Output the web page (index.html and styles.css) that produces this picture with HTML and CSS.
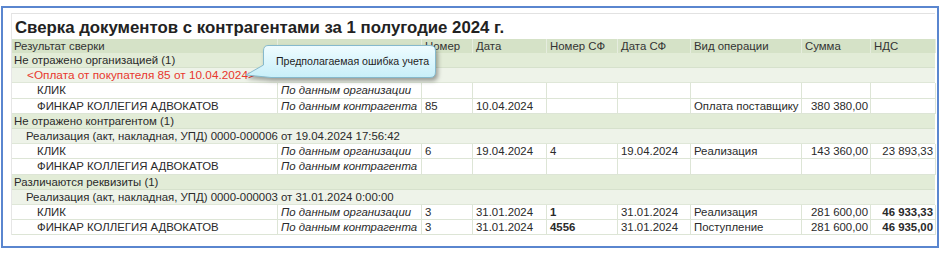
FILE: index.html
```html
<!DOCTYPE html>
<html lang="ru">
<head>
<meta charset="utf-8">
<title>Сверка документов</title>
<link rel="stylesheet" href="styles.css">
</head>
<body>
<div class="frame">
  <div class="panel">
    <div class="title">Сверка документов с контрагентами за 1 полугодие 2024 г.</div>
    <div class="grid">
      <div class="row head">
        <div class="c">Результат сверки</div><div class="c"></div><div class="c">Номер</div><div class="c">Дата</div><div class="c">Номер СФ</div><div class="c">Дата СФ</div><div class="c">Вид операции</div><div class="c">Сумма</div><div class="c">НДС</div>
      </div>
      <div class="row group"><div class="g">Не отражено организацией (1)</div></div>
      <div class="row sub"><div class="g red">&lt;Оплата от покупателя 85 от 10.04.2024&gt;</div></div>
      <div class="row item">
        <div class="c name">КЛИК</div><div class="c src">По данным организации</div><div class="c"></div><div class="c"></div><div class="c"></div><div class="c"></div><div class="c"></div><div class="c num"></div><div class="c num"></div>
      </div>
      <div class="row item">
        <div class="c name">ФИНКАР КОЛЛЕГИЯ АДВОКАТОВ</div><div class="c src">По данным контрагента</div><div class="c">85</div><div class="c">10.04.2024</div><div class="c"></div><div class="c"></div><div class="c">Оплата поставщику</div><div class="c num">380 380,00</div><div class="c num"></div>
      </div>
      <div class="row group"><div class="g">Не отражено контрагентом (1)</div></div>
      <div class="row sub"><div class="g">Реализация (акт, накладная, УПД) 0000-000006 от 19.04.2024 17:56:42</div></div>
      <div class="row item">
        <div class="c name">КЛИК</div><div class="c src">По данным организации</div><div class="c">6</div><div class="c">19.04.2024</div><div class="c">4</div><div class="c">19.04.2024</div><div class="c">Реализация</div><div class="c num">143 360,00</div><div class="c num">23 893,33</div>
      </div>
      <div class="row item">
        <div class="c name">ФИНКАР КОЛЛЕГИЯ АДВОКАТОВ</div><div class="c src">По данным контрагента</div><div class="c"></div><div class="c"></div><div class="c"></div><div class="c"></div><div class="c"></div><div class="c num"></div><div class="c num"></div>
      </div>
      <div class="row group"><div class="g">Различаются реквизиты (1)</div></div>
      <div class="row sub"><div class="g">Реализация (акт, накладная, УПД) 0000-000003 от 31.01.2024 0:00:00</div></div>
      <div class="row item">
        <div class="c name">КЛИК</div><div class="c src">По данным организации</div><div class="c">3</div><div class="c">31.01.2024</div><div class="c b">1</div><div class="c">31.01.2024</div><div class="c">Реализация</div><div class="c num">281 600,00</div><div class="c num b">46 933,33</div>
      </div>
      <div class="row item">
        <div class="c name">ФИНКАР КОЛЛЕГИЯ АДВОКАТОВ</div><div class="c src">По данным контрагента</div><div class="c">3</div><div class="c">31.01.2024</div><div class="c b">4556</div><div class="c">31.01.2024</div><div class="c">Поступление</div><div class="c num">281 600,00</div><div class="c num b">46 935,00</div>
      </div>
    </div>
  </div>
  <svg class="tip-shape" width="200" height="44" viewBox="0 0 200 44" aria-hidden="true">
    <defs>
      <linearGradient id="tg" x1="0" y1="0" x2="0" y2="1">
        <stop offset="0" stop-color="#effcff"/>
        <stop offset="1" stop-color="#c8eff9"/>
      </linearGradient>
    </defs>
    <path d="M27 2.5 H189 Q194.5 2.5 194.5 8 V29 Q194.5 34.5 189 34.5 H30 L5 32 L22.5 22 V8 Q22.5 2.5 27 2.5 Z" fill="url(#tg)" stroke="#86b9cc" stroke-width="1"/>
  </svg>
  <div class="tip-text">Предполагаемая ошибка учета</div>
</div>
</body>
</html>
```

FILE: styles.css
```css
* { box-sizing: border-box; }
html, body { margin: 0; padding: 0; background: #fff; }
body {
  font-family: "Liberation Sans", Arial, sans-serif;
  font-size: 11.4px;
  color: #2a2a2a;
}
.frame {
  position: relative;
  margin: 6px 0 0 1px;
  width: 938px;
  height: 242px;
  border: 2px solid #5a86cf;
  padding: 5px 0 0 8px;
}
.panel {
  width: 924px;
  border-top: 1px solid #e2e2e2;
  border-left: 1px solid #e6e6e6;
}
.title {
  height: 25px;
  line-height: 27px;
  padding-left: 3px;
  font-size: 16.8px;
  font-weight: bold;
  color: #222;
  white-space: nowrap;
}
.grid { display: flex; flex-direction: column; }
.row {
  display: grid;
  grid-template-columns: 266px 144px 51px 74px 71px 73px 111px 69px 65px;
  height: 15.2px;
  line-height: 15px;
}
.row.head { height: 14px; line-height: 14px; background: #d5e2c7; color: #333; }
.row.head .c { border-right: 1px solid #e6eddf; padding-left: 2px; }
.row.head .c:nth-child(n+3) { padding-left: 3px; }
.row.group, .row.sub { display: block; }
.row.group { background: #e2ecd7; border-bottom: 1px solid #d6e1cc; }
.row.sub { background: #eef3e9; border-bottom: 1px solid #dfe7d8; }
.g { padding-left: 2px; white-space: nowrap; line-height: 14px; }
.row.sub .g { padding-left: 14px; }
.row.sub .g.red { padding-left: 15px; color: #e8372d; font-size: 11.8px; }
.row.item { background: #fff; }
.row.item .c {
  border-right: 1px solid #dde5d6;
  border-bottom: 1px solid #dde5d6;
  padding-left: 3px;
  white-space: nowrap;
  overflow: hidden;
  line-height: 14px;
}
.row.item .c.name { padding-left: 25px; }
.row.item .c.src { font-style: italic; padding-left: 3px; }
.row.item .c.num { text-align: right; padding-right: 2px; padding-left: 0; }
.b { font-weight: bold; }
.tip-shape {
  position: absolute;
  left: 238px;
  top: 35px;
  filter: drop-shadow(2px 3px 2px rgba(0, 0, 0, 0.35));
}
.tip-text {
  position: absolute;
  left: 273px;
  top: 47px;
  font-size: 10.6px;
  line-height: 13px;
  color: #1e1e1e;
  white-space: nowrap;
}
```
